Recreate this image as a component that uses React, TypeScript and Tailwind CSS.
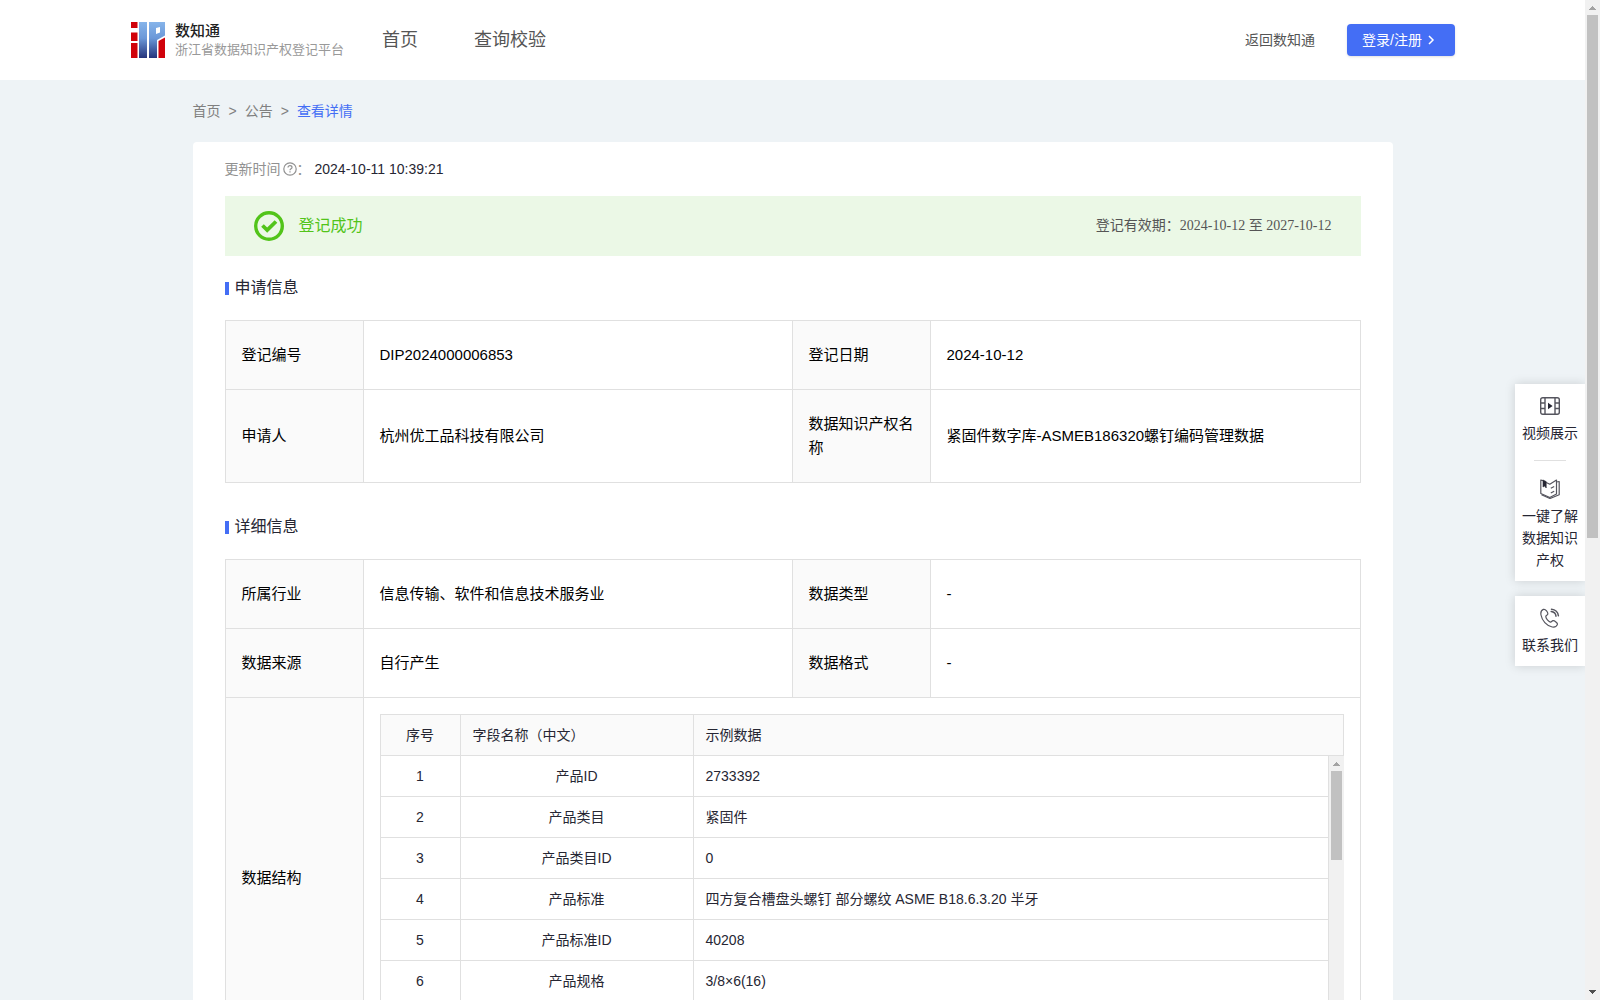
import React from "react";

const infoCell = "border border-[#e0e0e0] px-4 py-[22px] text-left font-normal";
const labelCell = infoCell + " bg-[#fafafa]";
const subCell = "border-b border-r border-[#e0e0e0] px-3";

const fields: [string, string][] = [
  ["产品ID", "2733392"],
  ["产品类目", "紧固件"],
  ["产品类目ID", "0"],
  ["产品标准", "四方复合槽盘头螺钉 部分螺纹 ASME B18.6.3.20 半牙"],
  ["产品标准ID", "40208"],
  ["产品规格", "3/8×6(16)"],
];

function Logo() {
  return (
    <svg width="34" height="36" viewBox="0 0 34 36" aria-hidden="true">
      <defs>
        <linearGradient id="blue" gradientUnits="userSpaceOnUse" x1="0" y1="0" x2="0" y2="36">
          <stop offset="0" stopColor="#86b4ea" />
          <stop offset="0.45" stopColor="#6b98d8" />
          <stop offset="1" stopColor="#25347c" />
        </linearGradient>
      </defs>
      <path d="M0 0h6.500v6H0zM0 10.500h6.500v8.500H0zM0 21h6.500v15H0z" fill="#d0020b" />
      <path d="M8 0h8v36H8z" fill="url(#blue)" />
      <path d="M18 0h16v13.500l-8 4.500v18h-8zM25 6v6l4-1.500V5z" fill="url(#blue)" fillRule="evenodd" />
      <path d="M27.500 19l6.500-3.500V36h-6.500z" fill="#d0020b" />
    </svg>
  );
}

function ScrollUp() {
  return (
    <svg width="15" height="15" viewBox="0 0 15 15" shapeRendering="crispEdges" aria-hidden="true">
      <path d="M7 6h1v1H7zM6 7h3v1H6zM5 8h5v1H5zM4 9h7v1H4z" fill="#a3a3a3" />
    </svg>
  );
}

function SectionTitle({ children, className }: { children: React.ReactNode; className: string }) {
  return (
    <h2 className={"mb-5 flex items-center gap-[6px] text-base leading-6 text-[#262633] " + className}>
      <span className="h-[13px] w-1 bg-[#446ef5]" />
      {children}
    </h2>
  );
}

function Columns() {
  return (
    <colgroup>
      <col className="w-[138px]" />
      <col className="w-[429px]" />
      <col className="w-[138px]" />
      <col />
    </colgroup>
  );
}

function FilmIcon() {
  return (
    <svg width="20" height="20" viewBox="0 0 20 20" fill="none" stroke="#55555e" strokeWidth="1.400" aria-hidden="true">
      <rect x="0.700" y="1.700" width="18.600" height="16.600" rx="2" />
      <path d="M5 2v16M15 2v16M1 7h4M1 12.500h4M15 7h4M15 12.500h4" />
      <path d="M8 6.800v6.400l4.600-3.200z" fill="#262633" stroke="none" />
    </svg>
  );
}

function BookIcon() {
  return (
    <svg width="20" height="20" viewBox="0 0 20 20" fill="none" stroke="#55555e" strokeWidth="1.200" strokeLinejoin="round" aria-hidden="true">
      <path d="M3 1.600L.8 1v13.500l9 4 6.700-3.500V1l-6.700 4.200-3.600-1.700" />
      <path d="M16.500 3l2.700-.5v13.300l-9.200 3.700-8.500-3.700" />
      <path d="M3 1v7l1.600-1 1.600 2V2.600z" fill="#262633" stroke="#262633" strokeWidth="0.600" />
      <path d="M10.800 9.300l3.400-1.800M10.800 14l3.400-1.800" />
    </svg>
  );
}

function PhoneIcon() {
  return (
    <svg width="20" height="20" viewBox="0 0 20 20" fill="none" stroke="#55555e" strokeWidth="1.200" strokeLinecap="round" strokeLinejoin="round" aria-hidden="true">
      <path d="M3.400 1.400C1.400 2.200.5 4.400 1 7c1 5.500 5.500 11 11.200 12 2.600.4 4.600-.7 5.200-2.600.4-1.400-2.900-3.900-4.400-3.700-1.300.2-1.500 1.600-2.700 1.400-1.900-.5-4.300-3.500-4.500-5.500 0-1.200 1.700-1.200 2-2.500C8.100 4.600 5.600.6 3.400 1.400z" />
      <path d="M11.500 1.200c3.800.2 6.600 3 6.900 6.600M11.200 3.600c2.700.3 4.500 2 4.800 4.600" strokeWidth="1.500" />
    </svg>
  );
}

export default function App() {
  return (
    <div className="relative flex h-screen overflow-hidden bg-[#eef3f6] font-['Helvetica','Liberation_Sans','Noto_Sans_CJK_SC',sans-serif] text-sm text-[#262633]">
      <div className="min-w-0 flex-1 overflow-y-auto [scrollbar-width:none]">
        <header className="flex h-20 items-center bg-white pr-[130px] pl-[131px] text-[#555]">
          <a href="#" className="flex w-[251px] items-center gap-[10px] whitespace-nowrap">
            <Logo />
            <span className="flex flex-col">
              <span className="text-[15px] leading-5 font-medium text-[#222]">数知通</span>
              <span className="text-[13px] leading-[18px] text-[#999]">浙江省数据知识产权登记平台</span>
            </span>
          </a>
          <nav className="flex gap-14 text-lg leading-6">
            <a href="#">首页</a>
            <a href="#">查询校验</a>
          </nav>
          <a href="#" className="ml-auto">返回数知通</a>
          <button className="ml-8 flex h-8 w-[108px] items-center gap-1 rounded-sm bg-[#446ef5] pl-[15px] text-white shadow-sm">
            登录/注册
            <svg width="10" height="10" viewBox="0 0 10 10" fill="none" stroke="currentColor" strokeWidth="1.500" aria-hidden="true">
              <path d="M3 1l4 4-4 4" />
            </svg>
          </button>
        </header>

        <main className="mx-auto max-w-[1200px]">
          <nav className="flex h-[62px] items-center gap-2 text-[#808080]">
            <a href="#">首页</a>
            <span>&gt;</span>
            <a href="#">公告</a>
            <span>&gt;</span>
            <a href="#" className="text-[#446ef5]">查看详情</a>
          </nav>

          <section className="rounded-t bg-white px-8 pt-4 pb-8">
            <div className="flex h-[22px] items-center">
              <span className="text-[#919191]">更新时间</span>
              <svg className="ml-[2px]" width="14" height="14" viewBox="0 0 14 14" fill="none" stroke="#919191" strokeWidth="1.200" aria-hidden="true">
                <circle cx="7" cy="7" r="6.200" />
                <path d="M5 5.600c0-1.300.9-2 2-2s2 .7 2 1.800c0 1.300-2 1.400-2 2.800M7 9.300v1.200" />
              </svg>
              <span className="text-[#919191]">：</span>
              <span className="ml-1">2024-10-11 10:39:21</span>
            </div>

            <div className="mt-4 flex h-[60px] items-center bg-[#ebf8e6] px-[29px]">
              <svg width="30" height="30" viewBox="0 0 30 30" fill="none" stroke="#52c41a" aria-hidden="true">
                <circle cx="15" cy="15" r="13.300" strokeWidth="3.400" />
                <path d="M8.500 14.500l4.700 4.500 8.800-8.500" strokeWidth="3.800" />
              </svg>
              <span className="ml-[15px] text-base text-[#52c41a]">登记成功</span>
              <span className="ml-auto font-['Liberation_Serif','Noto_Sans_CJK_SC',serif] text-[#555]">
                登记有效期：2024-10-12 至 2027-10-12
              </span>
            </div>

            <SectionTitle className="mt-5">申请信息</SectionTitle>
            <table className="w-full table-fixed border-collapse text-[15px] leading-6 text-black">
              <Columns />
              <tbody>
                <tr>
                  <th className={labelCell}>登记编号</th>
                  <td className={infoCell}>DIP2024000006853</td>
                  <th className={labelCell}>登记日期</th>
                  <td className={infoCell}>2024-10-12</td>
                </tr>
                <tr>
                  <th className={labelCell}>申请人</th>
                  <td className={infoCell}>杭州优工品科技有限公司</td>
                  <th className={labelCell}>数据知识产权名称</th>
                  <td className={infoCell}>紧固件数字库-ASMEB186320螺钉编码管理数据</td>
                </tr>
              </tbody>
            </table>

            <SectionTitle className="mt-8">详细信息</SectionTitle>
            <table className="w-full table-fixed border-collapse text-[15px] leading-6 text-black">
              <Columns />
              <tbody>
                <tr>
                  <th className={labelCell}>所属行业</th>
                  <td className={infoCell}>信息传输、软件和信息技术服务业</td>
                  <th className={labelCell}>数据类型</th>
                  <td className={infoCell}>-</td>
                </tr>
                <tr>
                  <th className={labelCell}>数据来源</th>
                  <td className={infoCell}>自行产生</td>
                  <th className={labelCell}>数据格式</th>
                  <td className={infoCell}>-</td>
                </tr>
                <tr>
                  <th className={labelCell}>数据结构</th>
                  <td colSpan={3} className="border border-[#e0e0e0] p-4">
                    <div className="text-sm text-[#262633]">
                      <table className="w-full table-fixed border-separate border-spacing-0 border-t border-l border-[#e0e0e0] bg-[#fafafa]">
                        <thead>
                          <tr className="h-[41px]">
                            <th className={subCell + " w-20 font-normal"}>序号</th>
                            <th className={subCell + " w-[233px] text-left font-normal"}>字段名称（中文）</th>
                            <th className={subCell + " text-left font-normal"}>示例数据</th>
                          </tr>
                        </thead>
                      </table>
                      <div className="flex h-[286px] overflow-hidden">
                        <div className="min-w-0 flex-1 border-l border-[#e0e0e0]">
                          <table className="w-full table-fixed border-separate border-spacing-0">
                            <tbody>
                              {fields.map(([name, value], i) => (
                                <tr key={name} className="h-[41px]">
                                  <td className={subCell + " w-20 text-center"}>{i + 1}</td>
                                  <td className={subCell + " w-[233px] text-center"}>{name}</td>
                                  <td className={subCell}>{value}</td>
                                </tr>
                              ))}
                            </tbody>
                          </table>
                        </div>
                        <div className="flex w-[15px] flex-col items-center bg-[#f1f1f1]">
                          <ScrollUp />
                          <div className="h-[89px] w-[11px] bg-[#c1c1c1]" />
                        </div>
                      </div>
                    </div>
                  </td>
                </tr>
              </tbody>
            </table>
          </section>
        </main>
      </div>

      <aside className="absolute top-96 right-[15px] flex w-[70px] flex-col gap-[15px] text-center leading-[22px]">
        <div className="flex flex-col items-center bg-white pb-[10px] shadow-[0_0_10px_rgba(0,0,0,0.15)]">
          <a href="#" className="flex flex-col items-center px-[7px] pt-3">
            <FilmIcon />
            <span className="mt-[6px]">视频展示</span>
          </a>
          <div className="mt-4 h-px w-8 bg-[#e0e0e0]" />
          <a href="#" className="flex flex-col items-center px-[7px] pt-[18px]">
            <BookIcon />
            <span className="mt-[6px]">一键了解数据知识产权</span>
          </a>
        </div>
        <a href="#" className="flex flex-col items-center bg-white px-[7px] pt-3 pb-[10px] shadow-[0_0_10px_rgba(0,0,0,0.15)]">
          <PhoneIcon />
          <span className="mt-[6px]">联系我们</span>
        </a>
      </aside>

      <div className="relative flex w-[15px] flex-col items-center justify-between bg-[#f1f1f1]">
        <div className="flex flex-col items-center">
          <ScrollUp />
          <div className="h-[523px] w-[11px] bg-[#c1c1c1]" />
        </div>
        <svg width="15" height="15" viewBox="0 0 15 15" shapeRendering="crispEdges" aria-hidden="true">
          <path d="M4 5h7v1H4zM5 6h5v1H5zM6 7h3v1H6zM7 8h1v1H7z" fill="#505050" />
        </svg>
      </div>
    </div>
  );
}
